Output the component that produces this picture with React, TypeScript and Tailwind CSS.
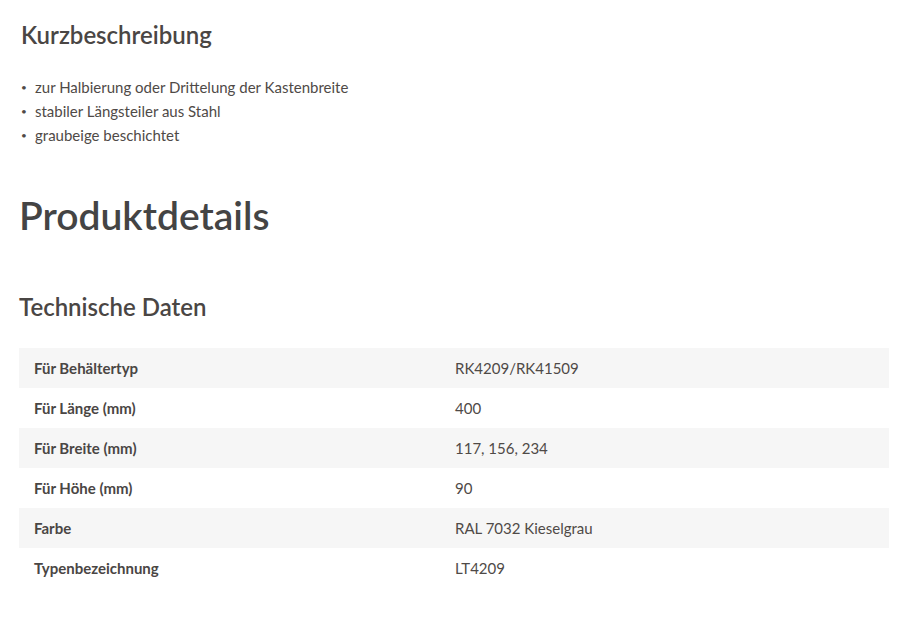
import React from "react";

const bullets = [
  "zur Halbierung oder Drittelung der Kastenbreite",
  "stabiler Längsteiler aus Stahl",
  "graubeige beschichtet",
];

const rows = [
  ["Für Behältertyp", "RK4209/RK41509"],
  ["Für Länge (mm)", "400"],
  ["Für Breite (mm)", "117, 156, 234"],
  ["Für Höhe (mm)", "90"],
  ["Farbe", "RAL 7032 Kieselgrau"],
  ["Typenbezeichnung", "LT4209"],
];

export default function App() {
  return (
    <div className="min-h-[630px] bg-white text-[#464646] font-['Lato','Open_Sans',sans-serif]">
      <div className="px-[19px] pt-[18px]">
        <h2 className="pl-[2px] text-[24px] leading-[34px] font-semibold text-[#4a4644]">Kurzbeschreibung</h2>
        <ul className="mt-[23px] pl-[2px] text-[15px] leading-[24px] text-[#4f4a47]">
          {bullets.map((b) => (
            <li key={b} className="flex items-center">
              <span className="w-[14px] text-[10px]">•</span>
              <span>{b}</span>
            </li>
          ))}
        </ul>

        <h1 className="mt-[40px] text-[39px] leading-[56px] font-semibold text-[#444]">Produktdetails</h1>

        <h3 className="mt-[48px] text-[24px] leading-[32px] font-semibold text-[#4a4644]">Technische Daten</h3>

        <table className="mt-[25px] w-[870px] table-fixed border-collapse text-[15px]">
          <tbody>
            {rows.map(([k, v], i) => (
              <tr key={k} className={i % 2 === 0 ? "bg-[#f6f6f6]" : "bg-white"}>
                <td className="w-[421px] h-[40px] px-[15px] font-bold text-[#4a4644]">{k}</td>
                <td className="h-[40px] px-[15px] text-[#4f4a47]">{v}</td>
              </tr>
            ))}
          </tbody>
        </table>
      </div>
    </div>
  );
}
